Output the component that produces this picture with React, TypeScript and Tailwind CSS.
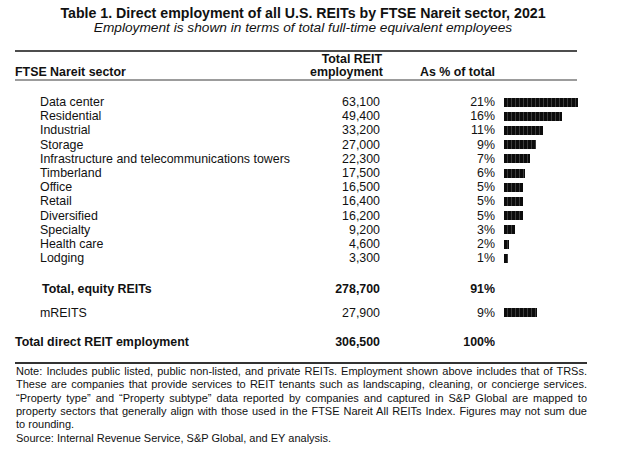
import React from 'react';

type Row = { sector: string; employment: number; share: string };

const sectors: Row[] = [
  { sector: 'Data center', employment: 63100, share: '21%' },
  { sector: 'Residential', employment: 49400, share: '16%' },
  { sector: 'Industrial', employment: 33200, share: '11%' },
  { sector: 'Storage', employment: 27000, share: '9%' },
  { sector: 'Infrastructure and telecommunications towers', employment: 22300, share: '7%' },
  { sector: 'Timberland', employment: 17500, share: '6%' },
  { sector: 'Office', employment: 16500, share: '5%' },
  { sector: 'Retail', employment: 16400, share: '5%' },
  { sector: 'Diversified', employment: 16200, share: '5%' },
  { sector: 'Specialty', employment: 9200, share: '3%' },
  { sector: 'Health care', employment: 4600, share: '2%' },
  { sector: 'Lodging', employment: 3300, share: '1%' },
];

const PX_PER_EMPLOYEE = 74 / 63100;

const noteLines = [
  'Note: Includes public listed, public non-listed, and private REITs. Employment shown above includes that of TRSs.',
  'These are companies that provide services to REIT tenants such as landscaping, cleaning, or concierge services.',
  '\u201CProperty type\u201D and \u201CProperty subtype\u201D data reported by companies and captured in S&P Global are mapped to',
  'property sectors that generally align with those used in the FTSE Nareit All REITs Index. Figures may not sum due',
];

function Bar({ employment }: { employment: number }) {
  return (
    <span
      className="block h-[9px] bg-[repeating-linear-gradient(90deg,#0c0c0c_0px,#0c0c0c_3px,#3c3c3c_3px,#3c3c3c_4px)]"
      style={{ width: `${employment * PX_PER_EMPLOYEE}px` }}
    />
  );
}

function TableRow({
  label,
  employment,
  share,
  bold = false,
  indent = 'pl-[25px]',
  showBar = true,
  className = '',
}: {
  label: string;
  employment: number;
  share: string;
  bold?: boolean;
  indent?: string;
  showBar?: boolean;
  className?: string;
}) {
  return (
    <div
      className={`grid grid-cols-[295px_70px_115px_1fr] items-center leading-[14.2px] ${bold ? 'font-bold' : ''} ${className}`}
    >
      <span className={`${indent} whitespace-nowrap`}>{label}</span>
      <span className="text-right">{employment.toLocaleString('en-US')}</span>
      <span className="text-right">{share}</span>
      <span className="pl-[9px]">{showBar && <Bar employment={employment} />}</span>
    </div>
  );
}

export default function App() {
  return (
    <div className="h-[449px] w-[624px] overflow-hidden bg-white pt-[5px] font-['Liberation_Sans',Arial,sans-serif] text-[12.4px] text-[#111]">
      <div className="ml-[15px] w-[576px] text-center">
        <div className="text-[14.2px] font-bold leading-[16px]">
          Table 1. Direct employment of all U.S. REITs by FTSE Nareit sector, 2021
        </div>
        <div className="text-[13.7px] italic leading-[14px]">
          Employment is shown in terms of total full-time equivalent employees
        </div>
      </div>

      <div className="ml-[15px] mt-[15px] w-[562px] border-t-2 border-[#4d4d4d]" />
      <div className="ml-[15px] grid w-[562px] grid-cols-[295px_70px_115px_1fr] border-b-2 border-[#9c9c9c] pt-[1px] text-[12.4px] font-bold leading-[13px]">
        <span className="self-end">FTSE Nareit sector</span>
        <span className="whitespace-nowrap text-right">
          <span className="-mr-[2px] block">Total REIT</span>
          <span className="block">employment</span>
        </span>
        <span className="self-end whitespace-nowrap text-right">As % of total</span>
        <span />
      </div>

      <div className="ml-[15px] mt-[14px] w-[562px]">
        {sectors.map(row => (
          <TableRow key={row.sector} label={row.sector} employment={row.employment} share={row.share} />
        ))}
        <TableRow
          label="Total, equity REITs"
          employment={278700}
          share="91%"
          bold
          indent="pl-[27px]"
          showBar={false}
          className="mt-[17px]"
        />
        <TableRow label="mREITS" employment={27900} share="9%" className="mt-[9px]" />
        <TableRow
          label="Total direct REIT employment"
          employment={306500}
          share="100%"
          bold
          indent="pl-0"
          showBar={false}
          className="mt-[15px]"
        />
      </div>

      <div className="ml-[15px] mt-[13px] w-[572px] border-t-2 border-[#333] pl-[1px] pt-px text-[11px] leading-[13.3px]">
        {noteLines.map(line => (
          <div key={line} className="whitespace-nowrap text-justify [text-align-last:justify]">
            {line}
          </div>
        ))}
        <div>to rounding.</div>
        <div>Source: Internal Revenue Service, S&amp;P Global, and EY analysis.</div>
      </div>
    </div>
  );
}
